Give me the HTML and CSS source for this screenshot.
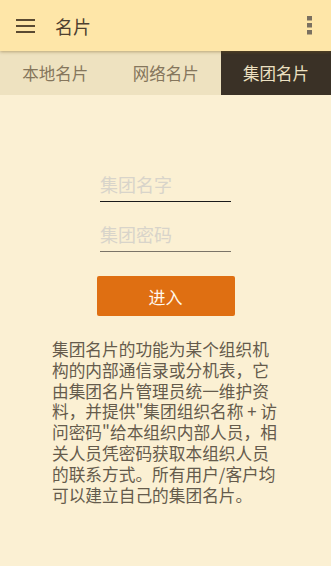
FILE: index.html
```
<!DOCTYPE html>
<html lang="zh-CN">
<head>
<meta charset="utf-8">
<title>名片</title>
<link rel="stylesheet" href="styles.css">
</head>
<body>
<header class="appbar">
  <svg class="menu-icon" width="20" height="14" viewBox="0 0 20 14"><rect x="0" y="0" width="19" height="2" fill="#5a4a32"/><rect x="0" y="6" width="19" height="2" fill="#5a4a32"/><rect x="0" y="12" width="19" height="2" fill="#5a4a32"/></svg>
  <h1 class="title">名片</h1>
  <svg class="more-icon" width="5" height="19" viewBox="0 0 5 19"><rect x="0" y="0" width="5" height="4.5" fill="#7a7060"/><rect x="0" y="7" width="5" height="4.5" fill="#7a7060"/><rect x="0" y="14" width="5" height="4.5" fill="#7a7060"/></svg>
</header>
<nav class="tabs">
  <div class="tab">本地名片</div>
  <div class="tab">网络名片</div>
  <div class="tab active">集团名片</div>
</nav>
<main class="content">
  <form class="login">
    <input class="field focused" type="text" placeholder="集团名字">
    <input class="field" type="password" placeholder="集团密码">
    <button class="enter" type="button">进入</button>
  </form>
  <p class="desc">集团名片的功能为某个组织机<br>构的内部通信录或分机表，它<br>由集团名片管理员统一维护资<br>料，并提供"集团组织名称 + 访<br>问密码"给本组织内部人员，相<br>关人员凭密码获取本组织人员<br>的联系方式。所有用户/客户均<br>可以建立自己的集团名片。</p>
</main>
</body>
</html>
```
FILE: styles.css
```
html, body {
  margin: 0;
  padding: 0;
}
body {
  width: 331px;
  min-height: 566px;
  background: #fbf0d3;
  font-family: "Noto Sans CJK SC", "Noto Sans", sans-serif;
}
.appbar {
  position: relative;
  z-index: 2;
  height: 51px;
  display: flex;
  align-items: center;
  background: #fee6a8;
  box-shadow: 0 1px 3px rgba(120, 90, 30, 0.45);
}
.menu-icon {
  margin-left: 16px;
  display: block;
}
.title {
  margin: 0 0 0 19px;
  font-size: 18px;
  font-weight: normal;
  color: #4e4030;
  flex: 1;
}
.more-icon {
  display: block;
  margin-right: 19px;
}
.tabs {
  display: grid;
  grid-template-columns: 1fr 1fr 110px;
  height: 44px;
  background: #eee2c0;
}
.tab {
  display: flex;
  align-items: center;
  justify-content: center;
  font-size: 16.5px;
  color: #85765c;
}
.tab.active {
  background: #3a3126;
  color: #ece0c2;
}
.content {
  display: flex;
  flex-direction: column;
  align-items: center;
}
.login {
  display: flex;
  flex-direction: column;
  align-items: center;
  margin-top: 75px;
}
.field {
  display: block;
  box-sizing: border-box;
  width: 131px;
  height: 32px;
  margin: 0;
  padding: 0 0 4px 0;
  border: none;
  border-bottom: 1.5px solid #7a7468;
  background: transparent;
  font-family: "Noto Sans CJK SC", sans-serif;
  font-size: 18px;
  color: #333;
  outline: none;
}
.field + .field {
  margin-top: 18px;
}
.field.focused {
  border-bottom-color: #1a1a1a;
}
.field::placeholder {
  color: #d8d4ca;
}
.enter {
  margin-top: 24px;
  width: 138px;
  height: 40px;
  border: none;
  border-radius: 2px;
  background: #df6f12;
  color: #fff8ec;
  font-family: "Noto Sans CJK SC", sans-serif;
  font-size: 17px;
  padding: 0;
}
.desc {
  box-sizing: border-box;
  width: 331px;
  margin: 23px 0 0 0;
  padding: 0 0 0 52px;
  font-size: 16.7px;
  line-height: 20.8px;
  white-space: nowrap;
  color: #655b4c;
}
```
